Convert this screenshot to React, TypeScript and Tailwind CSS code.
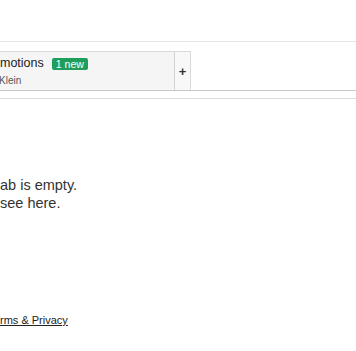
import React from "react";

export default function App() {
  return (
    <div className="relative h-[351px] w-[356px] overflow-hidden bg-white font-['Liberation_Sans',Arial,sans-serif] text-[#222]">
      <div className="pt-[41px]">
        <div className="h-px bg-[#e5e5e5]" />

        {/* tab strip */}
        <div className="mt-[9px] flex h-[39px]">
          <div className="flex border-t border-r border-[#d9d9d9]">
            <div className="w-[174px] bg-[#f5f5f5] pt-[4px]">
              <div className="flex h-[15px] items-center">
                <span className="text-[12.5px] leading-[15px] text-[#222]">motions</span>
                <span className="ml-[8px] rounded-[2px] bg-[#1f9d5b] px-[4px] text-[10.5px] leading-[12px] text-white">
                  1 new
                </span>
              </div>
              <div className="-ml-[1px] mt-[4px] text-[10px] leading-[12px] text-[#555]">Klein</div>
            </div>
            <div className="flex w-[16px] items-center justify-center border-l border-[#d4d4d4] bg-[#f8f8f8]">
              <span className="text-[13px] font-bold leading-none text-[#333]">+</span>
            </div>
          </div>
        </div>
        <div className="h-px bg-[#c8c8c8]" />
        <div className="mt-[7px] h-px bg-[#dedede]" />

        {/* empty state */}
        <div className="mt-[77px] text-[14.5px] leading-[18px] text-[#333]">
          <p>ab is empty.</p>
          <p>see here.</p>
        </div>

        <div className="mt-[102px] text-[11px] leading-[13px]">
          <a className="text-[#222] underline">rms &amp; Privacy</a>
        </div>
      </div>
    </div>
  );
}
